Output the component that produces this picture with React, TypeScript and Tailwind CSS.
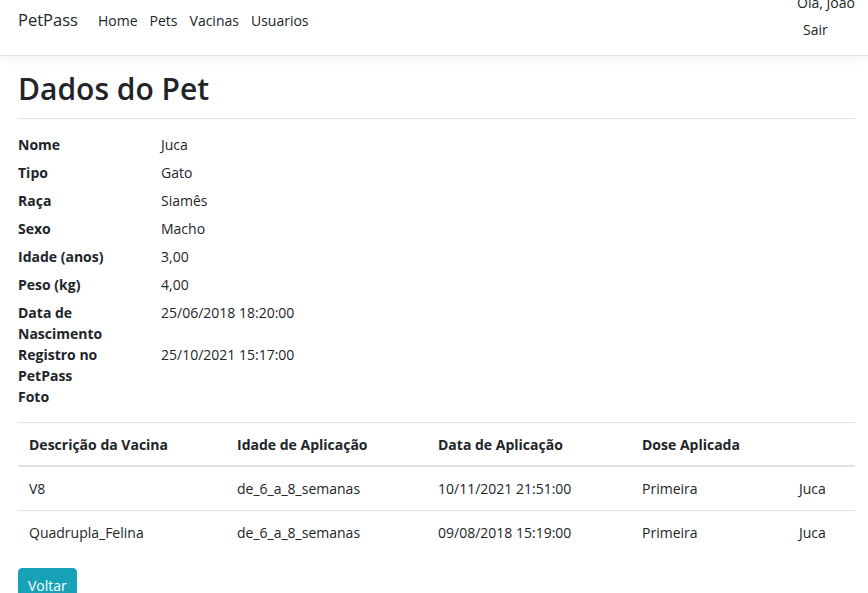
const font = { fontFamily: '"Segoe UI", "Open Sans", "Noto Sans", sans-serif' };

const details: [string, string][] = [
  ["Nome", "Juca"],
  ["Tipo", "Gato"],
  ["Raça", "Siamês"],
  ["Sexo", "Macho"],
  ["Idade (anos)", "3,00"],
  ["Peso (kg)", "4,00"],
  ["Data de Nascimento", "25/06/2018 18:20:00"],
  ["Registro no PetPass", "25/10/2021 15:17:00"],
  ["Foto", ""],
];

const vacinas = [
  ["V8", "de_6_a_8_semanas", "10/11/2021 21:51:00", "Primeira", "Juca"],
  ["Quadrupla_Felina", "de_6_a_8_semanas", "09/08/2018 15:19:00", "Primeira", "Juca"],
];

function Navbar() {
  return (
    <nav className="h-[56px] overflow-hidden border-b border-[#dee2e6] bg-white shadow-[0_3px_10px_rgba(0,0,0,0.05)] flex items-start pl-[18px] pr-[13px]">
      <a className="mt-[7px] w-[60px] text-[16.5px] leading-[26px] text-[#212529]">PetPass</a>
      <ul className="flex mt-[10px] ml-[14px] text-[14px] leading-[21px] text-[#212529]">
        <li className="px-[6px]">Home</li>
        <li className="px-[6px]">Pets</li>
        <li className="px-[6px]">Vacinas</li>
        <li className="px-[6px]">Usuarios</li>
      </ul>
      <div className="ml-auto flex flex-col mt-[-8px] gap-[6px] text-[14px] leading-[21px] text-[#212529] w-[58px]">
        <span>Olá, João</span>
        <span className="pl-[6px]">Sair</span>
      </div>
    </nav>
  );
}

export default function App() {
  return (
    <div className="min-h-[593px] bg-white text-[#212529] text-[14px] leading-[21px]" style={font}>
      <Navbar />
      <main className="pl-[18px] pr-[13px] pt-[13px]">
        <h1 className="text-[30px] leading-[40px] font-semibold mb-[7px]">Dados do Pet</h1>
        <hr className="border-t border-[#dee2e6] mt-[9px] mb-[15px]" />
        <dl className="grid grid-cols-[143px_1fr]">
          {details.map(([k, v]) => (
            <div key={k} className="contents">
              <dt className="font-bold pr-[29px]">{k}</dt>
              <dd className="mb-[7px] min-h-[21px]">{v}</dd>
            </div>
          ))}
        </dl>
        <hr className="border-t border-[#dee2e6] mt-[8px]" />
        <table className="w-full table-fixed border-collapse mb-[14px]">
          <colgroup>
            <col className="w-[208px]" />
            <col className="w-[201px]" />
            <col className="w-[204px]" />
            <col className="w-[157px]" />
            <col />
          </colgroup>
          <thead>
            <tr className="border-b-2 border-[#dee2e6]">
              {["Descrição da Vacina", "Idade de Aplicação", "Data de Aplicação", "Dose Aplicada", ""].map((h, i) => (
                <th key={i} className="text-left font-bold px-[11px] py-[10.5px] whitespace-nowrap">
                  {h}
                </th>
              ))}
            </tr>
          </thead>
          <tbody>
            {vacinas.map((row, r) => (
              <tr key={r} className={r > 0 ? "border-t border-[#dee2e6]" : ""}>
                {row.map((c, i) => (
                  <td key={i} className="px-[11px] py-[11px] whitespace-nowrap">
                    {c}
                  </td>
                ))}
              </tr>
            ))}
          </tbody>
        </table>
        <button className="bg-[#17a2b8] text-white rounded-[4px] px-[9px] py-[6px] leading-[21px] border border-[#17a2b8]">
          Voltar
        </button>
      </main>
    </div>
  );
}
